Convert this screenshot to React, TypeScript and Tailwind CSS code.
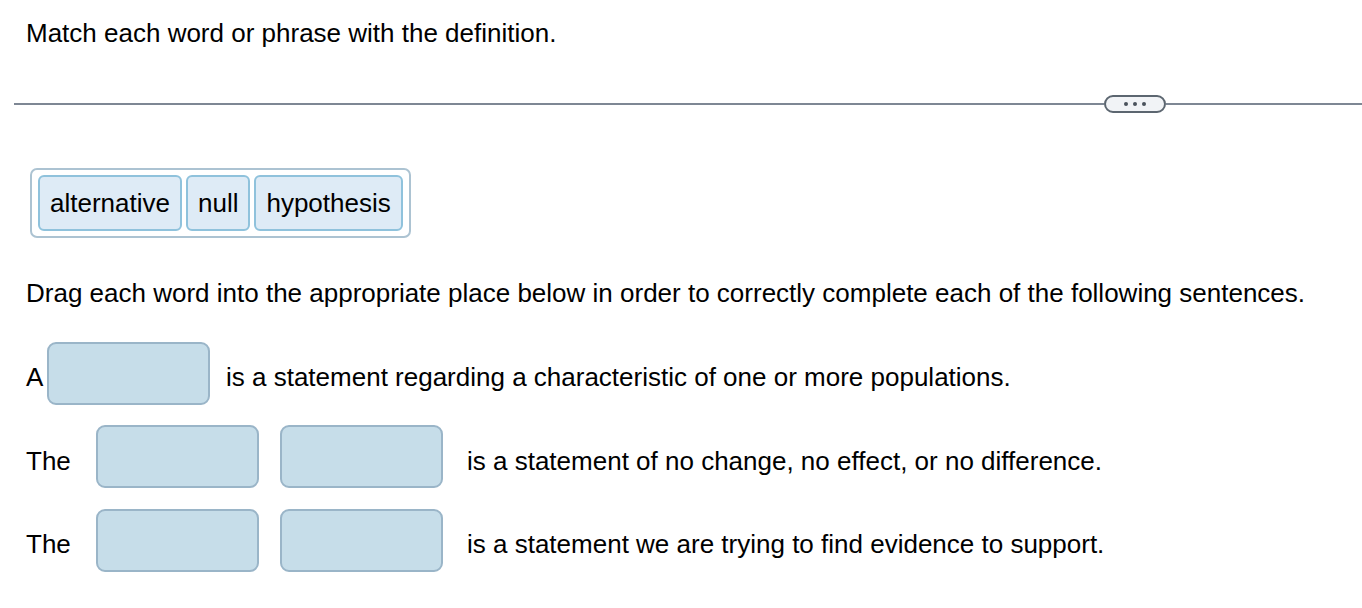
import React from "react";

const Blank = () => (
  <div className="h-[63px] w-[163px] shrink-0 rounded-[9px] border-2 border-[#9ab5c8] bg-[#c6dde9]" />
);

const Tile = ({ label }: { label: string }) => (
  <div className="flex h-[56px] items-center rounded-[6px] border-2 border-[#8fc2dc] bg-[#deebf6] px-[10px] text-[26px] text-black">
    {label}
  </div>
);

const App = () => {
  return (
    <div
      className="relative h-[608px] w-[1362px] overflow-hidden bg-white text-black"
      style={{ fontFamily: '"Liberation Sans", Arial, sans-serif' }}
    >
      <div className="pl-[26px] pt-[18px] text-[26px] leading-[30px]">
        Match each word or phrase with the definition.
      </div>

      <div className="mt-[47px] flex items-center pl-[14px]">
        <div className="h-[2px] flex-1 bg-[#7e8794]" />
        <div className="flex h-[18px] w-[62px] items-center justify-center gap-[5px] rounded-full border-2 border-[#5c6670] bg-[#f1f3f6]">
          <span className="h-[4px] w-[4px] rounded-full bg-[#4a525c]" />
          <span className="h-[4px] w-[4px] rounded-full bg-[#4a525c]" />
          <span className="h-[4px] w-[4px] rounded-full bg-[#4a525c]" />
        </div>
        <div className="h-[2px] w-[196px] bg-[#7e8794]" />
      </div>

      <div className="ml-[30px] mt-[55px] inline-flex gap-[4px] rounded-[7px] border-2 border-[#acc3d2] px-[6px] py-[5px]">
        <Tile label="alternative" />
        <Tile label="null" />
        <Tile label="hypothesis" />
      </div>

      <div className="pl-[26px] pt-[40px] text-[26px] leading-[30px]">
        Drag each word into the appropriate place below in order to correctly
        complete each of the following sentences.
      </div>

      <div className="mt-[34px] flex items-center pl-[26px] text-[26px]">
        <span className="w-[21px] pt-[8px]">A</span>
        <Blank />
        <span className="ml-[16px] pt-[8px]">
          is a statement regarding a characteristic of one or more populations.
        </span>
      </div>

      <div className="mt-[20px] flex items-center pl-[26px] text-[26px]">
        <span className="w-[70px] pt-[10px]">The</span>
        <Blank />
        <div className="w-[21px] shrink-0" />
        <Blank />
        <span className="ml-[24px] pt-[10px]">
          is a statement of no change, no effect, or no difference.
        </span>
      </div>

      <div className="mt-[21px] flex items-center pl-[26px] text-[26px]">
        <span className="w-[70px] pt-[8px]">The</span>
        <Blank />
        <div className="w-[21px] shrink-0" />
        <Blank />
        <span className="ml-[24px] pt-[8px]">
          is a statement we are trying to find evidence to support.
        </span>
      </div>
    </div>
  );
};

export default App;
